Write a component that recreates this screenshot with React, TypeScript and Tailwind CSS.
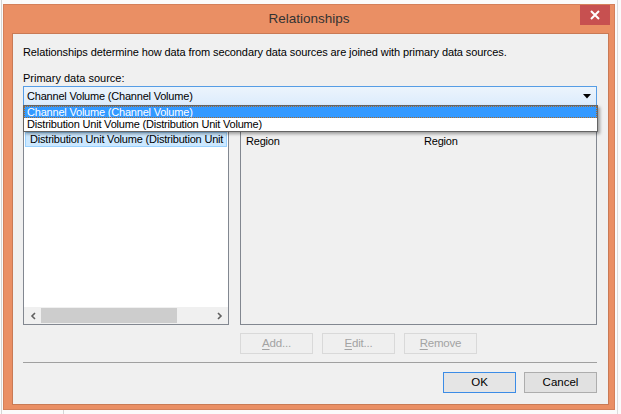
import React from 'react'

const FONT = { fontFamily: '"Liberation Sans", Arial, sans-serif' }

function DisabledButton({ label, hot }: { label: string; hot: string }) {
  const rest = label.slice(1)
  return (
    <div className="w-[73px] h-[21px] border border-[#d9d9d9] bg-[#efefef] flex items-center justify-center text-[11.5px] text-[#a3a3a3]">
      <span>
        <span className="underline underline-offset-2">{hot}</span>
        {rest}
      </span>
    </div>
  )
}

export default function App() {
  return (
    <div className="w-[621px] h-[414px] bg-[#fbfbfb] relative overflow-hidden" style={FONT}>
      {/* bits of the window behind */}
      <div className="absolute left-[1px] top-0 w-px h-[414px] bg-[#d5d5d5]" />
      <div className="absolute left-[63px] top-[410px] w-px h-[4px] bg-[#d5d5d5]" />
      <div className="absolute left-[617px] top-0 w-px h-[414px] bg-[#dcdcdc]" />

      <div className="absolute left-[3px] top-[4px] w-[612px] h-[406px] bg-[#ea8f64] border border-[#d4805a] flex flex-col">
        {/* title bar */}
        <div className="h-[28px] relative flex items-center justify-center">
          <span className="text-[13.5px] text-[#333] mt-[1px]">Relationships</span>
          <div className="absolute right-[4px] top-0 w-[30px] h-[20px] bg-[#c75050] flex items-center justify-center">
            <svg width="10" height="10" viewBox="0 0 10 10">
              <path d="M1 1 L9 9 M9 1 L1 9" stroke="#fff" strokeWidth="2" />
            </svg>
          </div>
        </div>

        {/* client area */}
        <div className="ml-[8px] mr-[5px] h-[372px] bg-[#f0f0f0] border border-[#c97a55] text-[11px] tracking-[-0.2px] text-black relative">
          <div className="pl-[10px] pr-[11px] flex flex-col">
            <div className="mt-[11px] leading-[15px] tracking-[-0.1px]">
              Relationships determine how data from secondary data sources are joined with primary data sources.
            </div>
            <div className="mt-[11px] leading-[15px] tracking-normal">Primary data source:</div>

            {/* combobox */}
            <div className="h-[20px] border border-[#569de5] bg-gradient-to-b from-[#ecf4fc] to-[#dcecfc] flex items-center px-[3px] relative">
              <span className="leading-[15px]">Channel Volume (Channel Volume)</span>
              <svg className="absolute right-[5px] top-[7px]" width="8" height="5" viewBox="0 0 8 5">
                <path d="M0 0 H8 L4 4.5 Z" fill="#000" />
              </svg>
            </div>

            {/* panels */}
            <div className="mt-[24px] flex gap-[11px]">
              <div className="w-[206px] h-[195px] border border-[#828790] bg-white flex flex-col">
                <div className="mx-[1px] mt-[1px] h-[15px] bg-[#cce8ff] border border-[#99d1ff] leading-[13px] px-[4px] whitespace-nowrap overflow-hidden">
                  Distribution Unit Volume (Distribution Unit Volume)
                </div>
                <div className="flex-1" />
                <div className="h-[17px] bg-[#f0f0f0] flex items-center">
                  <div className="w-[17px] h-[17px] flex items-center justify-center">
                    <svg width="6" height="8" viewBox="0 0 6 8">
                      <path d="M5 1 L2 4 L5 7" stroke="#606060" strokeWidth="1.6" fill="none" />
                    </svg>
                  </div>
                  <div className="w-[136px] h-[15px] bg-[#cdcdcd]" />
                  <div className="flex-1" />
                  <div className="w-[17px] h-[17px] flex items-center justify-center">
                    <svg width="6" height="8" viewBox="0 0 6 8">
                      <path d="M1 1 L4 4 L1 7" stroke="#606060" strokeWidth="1.6" fill="none" />
                    </svg>
                  </div>
                </div>
              </div>
              <div className="w-[358px] h-[195px] border border-[#828790] bg-[#f0f0f0]">
                <div className="flex leading-[15px] pt-[3px]">
                  <span className="w-[183px] pl-[5px]">Region</span>
                  <span>Region</span>
                </div>
              </div>
            </div>

            {/* action buttons */}
            <div className="mt-[8px] flex gap-[9px] pl-[217px]">
              <DisabledButton label="Add..." hot="A" />
              <DisabledButton label="Edit..." hot="E" />
              <DisabledButton label="Remove" hot="R" />
            </div>

            <div className="mt-[8px] h-px bg-[#a0a0a0]" />

            <div className="mt-[9px] flex justify-end gap-[8px] text-[11.5px] tracking-normal">
              <div className="w-[73px] h-[21px] border border-[#3c8ce6] bg-[#e5e5e5] flex items-center justify-center">OK</div>
              <div className="w-[73px] h-[21px] border border-[#adadad] bg-[#e1e1e1] flex items-center justify-center">Cancel</div>
            </div>
          </div>

          {/* open dropdown list */}
          <div className="absolute left-[10px] top-[71px] w-[575px] h-[27px] bg-white border border-[#646464] shadow-[2px_2px_3px_rgba(0,0,0,0.35)] flex flex-col">
            <div className="h-[13px] bg-[#3399ff] text-white leading-[12px] px-[3px] outline-1 outline-dotted outline-[#a86a2a] -outline-offset-1">
              Channel Volume (Channel Volume)
            </div>
            <div className="h-[13px] leading-[13px] px-[3px]">
              Distribution Unit Volume (Distribution Unit Volume)
            </div>
          </div>
        </div>
      </div>
    </div>
  )
}
